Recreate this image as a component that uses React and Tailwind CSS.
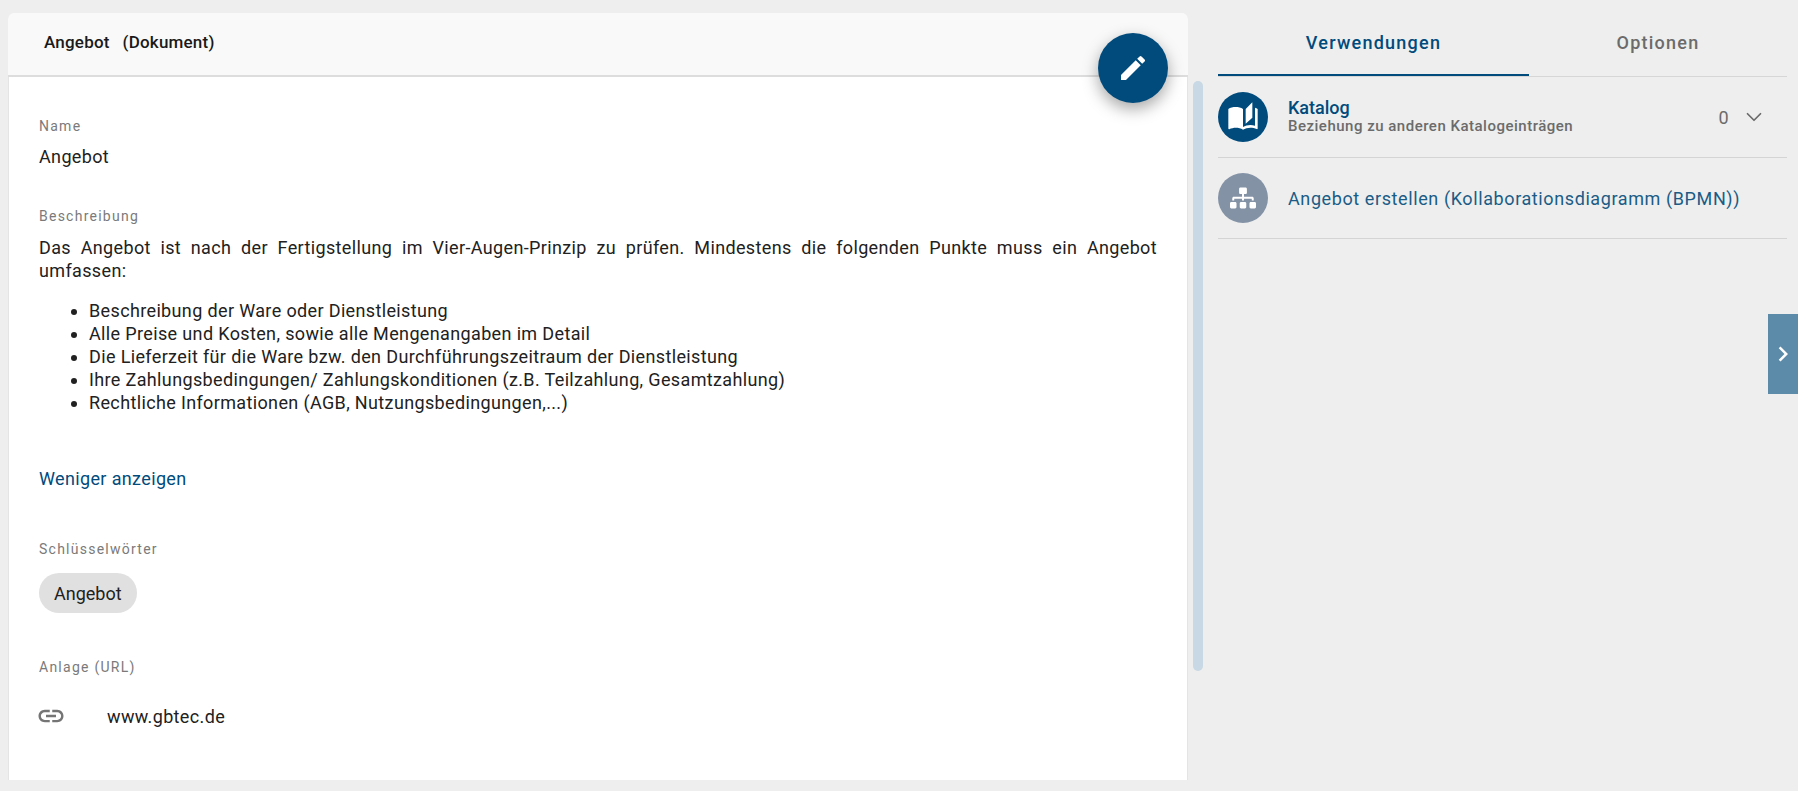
import React from "react";
import { MdEdit, MdLink, MdChevronRight, MdAutoStories } from "react-icons/md";
import { FaSitemap } from "react-icons/fa";
import { ChevronDown } from "lucide-react";

const points = [
  "Beschreibung der Ware oder Dienstleistung",
  "Alle Preise und Kosten, sowie alle Mengenangaben im Detail",
  "Die Lieferzeit für die Ware bzw. den Durchführungszeitraum der Dienstleistung",
  "Ihre Zahlungsbedingungen/ Zahlungskonditionen (z.B. Teilzahlung, Gesamtzahlung)",
  "Rechtliche Informationen (AGB, Nutzungsbedingungen,...)",
];

function Label({ children }) {
  return <div className="text-[14px] leading-[18px] tracking-[1.25px] text-[#7a7a7a]">{children}</div>;
}

function App() {
  return (
    <div className="relative flex h-[791px] w-[1798px] overflow-hidden bg-[#eeeeee] font-['Roboto',sans-serif] text-[18px] tracking-[0.36px] text-[#212121]">
      <div className="relative mt-[13px] ml-[8px] flex h-[767px] w-[1180px] shrink-0 flex-col rounded-t-[6px] border-x border-[#e4e4e4] bg-white">
        <div className="mx-[-1px] flex h-[64px] shrink-0 items-center rounded-t-[6px] border-b-2 border-[#dddddd] bg-[#f9f9f9] pb-[3px] pl-[36px] text-[17px] font-medium tracking-[0.2px] text-[#1a1a1a]">
          <span>Angebot</span>
          <span className="ml-[13px]">(Dokument)</span>
        </div>

        <button className="absolute top-[20px] left-[1089px] flex h-[70px] w-[70px] items-center justify-center rounded-full bg-[#004b7c] text-white shadow-[0_6px_16px_rgba(0,0,0,0.35)]">
          <MdEdit size={32} />
        </button>

        <div className="flex flex-col pt-[40px] pr-[30px] pl-[30px]">
          <Label>Name</Label>
          <div className="mt-[10px] leading-[23px]">Angebot</div>

          <div className="mt-[39px]">
            <Label>Beschreibung</Label>
          </div>
          <p className="mt-[11px] text-justify leading-[23px]">
            Das Angebot ist nach der Fertigstellung im Vier-Augen-Prinzip zu prüfen. Mindestens die folgenden Punkte muss ein Angebot umfassen:
          </p>
          <ul className="mt-[17px] list-disc pl-[50px] leading-[23px]">
            {points.map((point) => (
              <li key={point}>{point}</li>
            ))}
          </ul>

          <a className="mt-[53px] leading-[23px] text-[#004b7c]">Weniger anzeigen</a>

          <div className="mt-[50px]">
            <Label>Schlüsselwörter</Label>
          </div>
          <div className="mt-[15px] flex">
            <span className="flex h-[40px] items-center rounded-full bg-[#e0e0e0] px-[15px] tracking-normal">Angebot</span>
          </div>

          <div className="mt-[45px]">
            <Label>Anlage (URL)</Label>
          </div>
          <div className="mt-[25px] flex h-[30px] items-center">
            <MdLink size={30} className="ml-[-3px] text-[#757575]" />
            <span className="ml-[41px]">www.gbtec.de</span>
          </div>
        </div>
      </div>

      <div className="mt-[81px] ml-[5px] h-[590px] w-[10px] shrink-0 rounded-[5px] bg-[#c8d8e4]" />

      <div className="ml-[15px] flex w-[569px] shrink-0 flex-col">
        <div className="mt-[13px] flex h-[64px] border-b border-[#d6d6d6] text-[18px] font-medium tracking-[1.25px]">
          <div className="flex w-[311px] items-center justify-center border-b-2 border-[#004b7c] pb-[3px] text-[#004b7c]">Verwendungen</div>
          <div className="flex flex-1 items-center justify-center pb-[5px] text-[#6b6b6b]">Optionen</div>
        </div>

        <div className="flex h-[81px] items-center border-b border-[#d4d4d4]">
          <div className="flex h-[50px] w-[50px] shrink-0 items-center justify-center rounded-full bg-[#004b7c] text-white">
            <MdAutoStories size={32} />
          </div>
          <div className="ml-[20px] flex-1 pb-[1px]">
            <div className="text-[18px] leading-[20px] font-medium tracking-normal text-[#004b7c]">Katalog</div>
            <div className="text-[15px] leading-[17px] font-medium tracking-[0.5px] text-[#6b6b6b]">Beziehung zu anderen Katalogeinträgen</div>
          </div>
          <span className="text-[#6b6b6b]">0</span>
          <ChevronDown size={26} strokeWidth={1.6} className="mr-[20px] ml-[12px] text-[#6b6b6b]" />
        </div>

        <div className="flex h-[81px] items-center border-b border-[#d4d4d4]">
          <div className="flex h-[50px] w-[50px] shrink-0 items-center justify-center rounded-full bg-[#8492a6] text-white">
            <FaSitemap size={26} />
          </div>
          <div className="ml-[20px] text-[18px] tracking-[0.6px] text-[#1a5c86]">Angebot erstellen (Kollaborationsdiagramm (BPMN))</div>
        </div>
      </div>

      <div className="absolute top-[314px] right-0 flex h-[80px] w-[30px] items-center justify-center bg-[#5b8ba9] text-white">
        <MdChevronRight size={32} />
      </div>
    </div>
  );
}

export default App;
